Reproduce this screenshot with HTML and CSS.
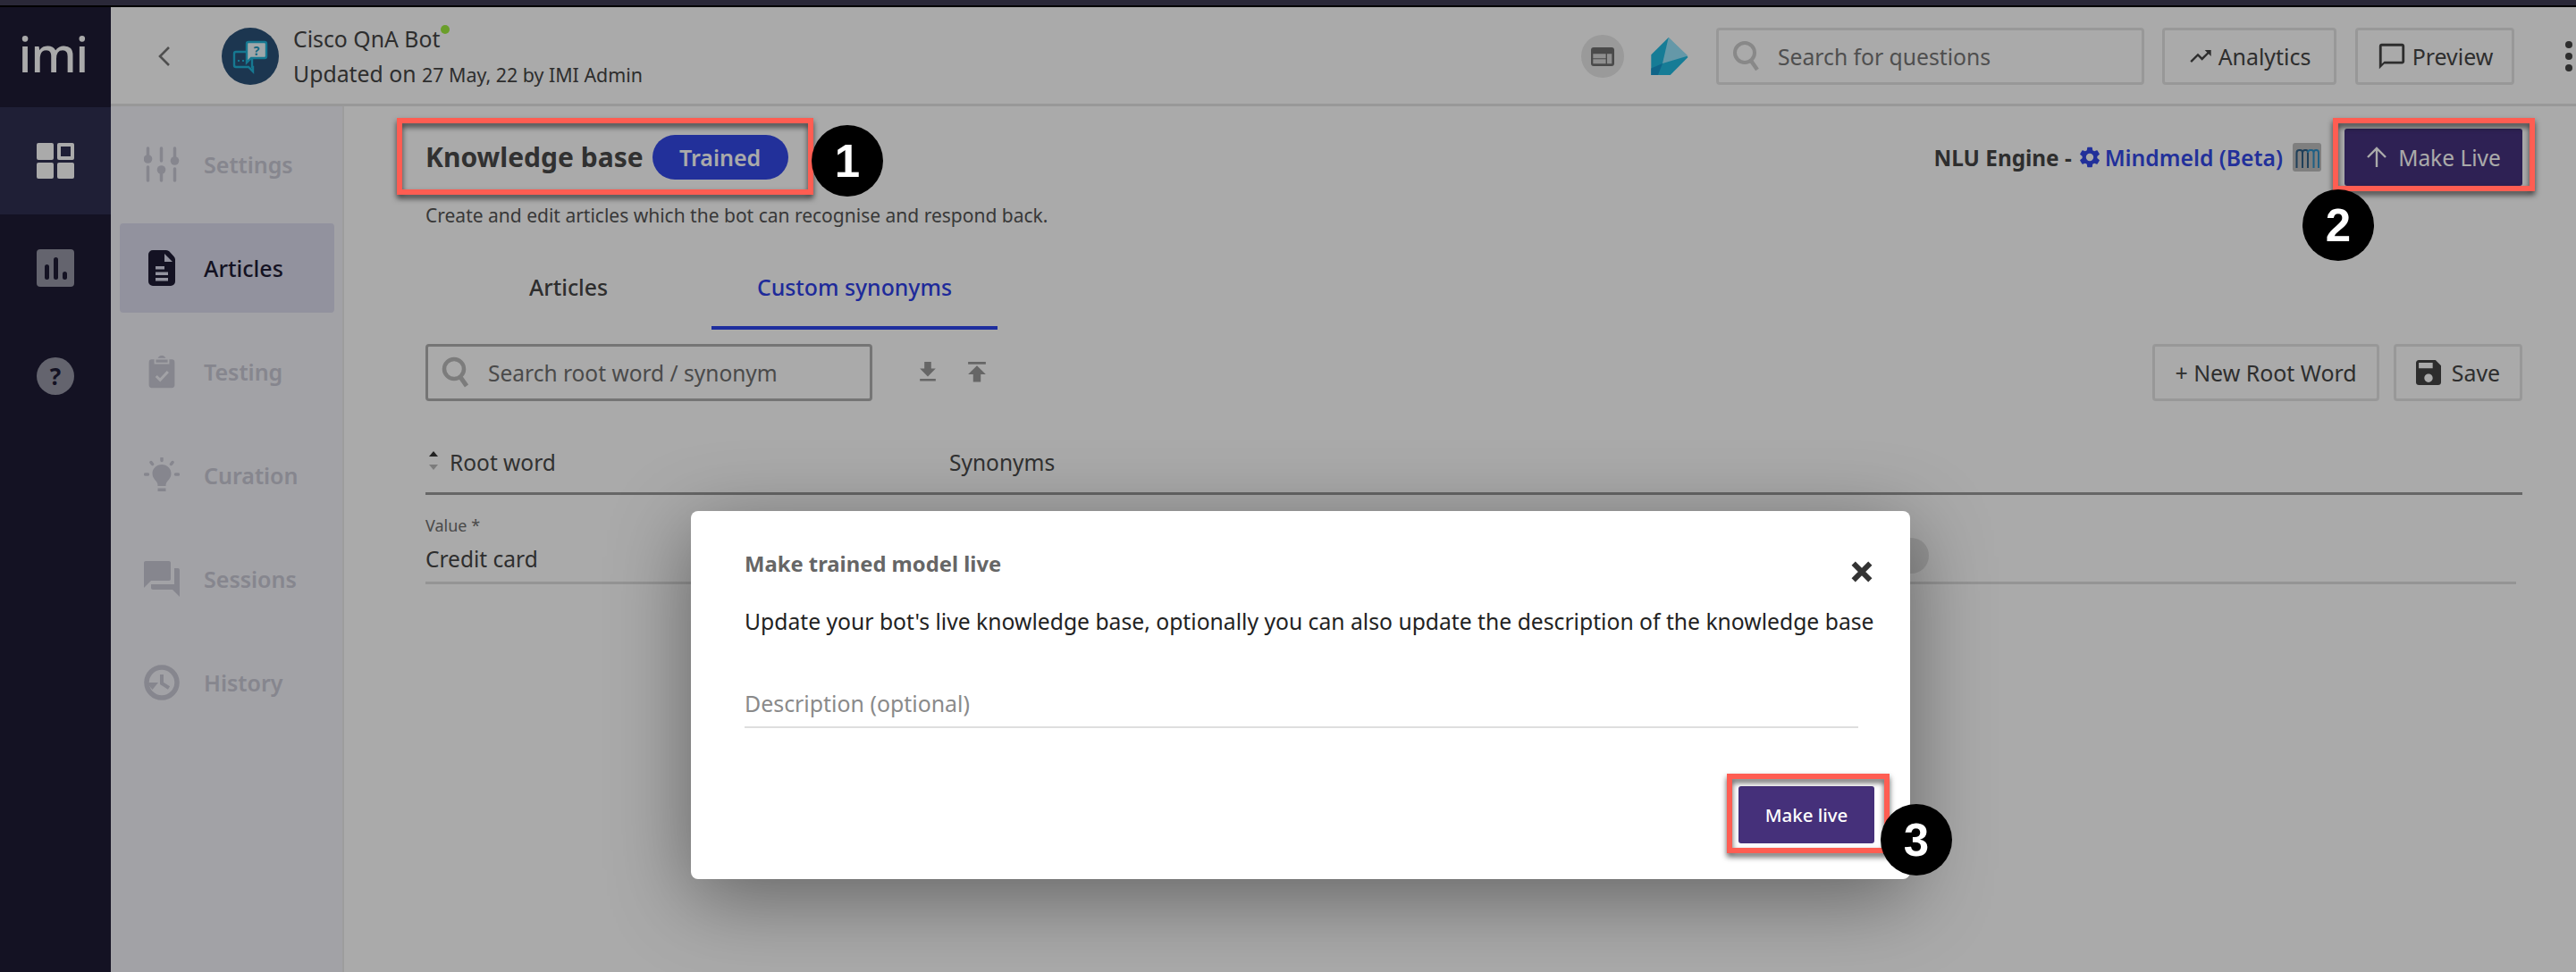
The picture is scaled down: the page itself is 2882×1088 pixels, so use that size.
FILE: index.html
```html
<!DOCTYPE html>
<html lang="en">
<head>
<meta charset="utf-8">
<title>Knowledge base</title>
<link rel="stylesheet" href="styles.css">
</head>
<body>
<div class="strip"></div>
<div class="app">
  <aside class="rail">
    <div class="logo">imi</div>
    <div class="rail-item active">
      <svg class="rail-icon" viewBox="0 0 42 40"><rect x="0" y="0" width="19" height="19" rx="2" fill="#fff"/><rect x="23" y="0" width="19" height="19" rx="2" fill="#fff"/><rect x="27" y="4" width="11" height="11" fill="#2f2f51"/><rect x="0" y="22" width="19" height="18" rx="2" fill="#fff"/><rect x="23" y="22" width="19" height="18" rx="2" fill="#fff"/></svg>
    </div>
    <div class="rail-item">
      <svg class="rail-icon" viewBox="0 0 42 42"><rect width="42" height="42" rx="4" fill="#9696a6"/><rect x="9" y="17" width="5" height="17" rx="2.5" fill="#1e1c35"/><rect x="19" y="9" width="5" height="25" rx="2.5" fill="#1e1c35"/><rect x="29" y="25" width="5" height="9" rx="2.5" fill="#1e1c35"/></svg>
    </div>
    <div class="rail-item short">
      <div class="help">?</div>
    </div>
  </aside>
  <div class="workspace">
    <header class="topbar">
      <svg class="back" viewBox="0 0 16 24"><path d="M13 2 3 12l10 10" fill="none" stroke="#777" stroke-width="2.6"/></svg>
      <div class="avatar">
        <svg viewBox="0 0 64 64"><path d="M16 27h18v17h1v5l-5-5H16a2 2 0 0 1-2-2V29a2 2 0 0 1 2-2z" fill="none" stroke="#22b5da" stroke-width="2.4"/><path d="M18 37h2M23 37h2" stroke="#22b5da" stroke-width="1.800"/><path d="M30 16h18a2 2 0 0 1 2 2v14a2 2 0 0 1-2 2H33l-5 5V18a2 2 0 0 1 2-2z" fill="#f0fbff" stroke="#22b5da" stroke-width="2.4"/><text x="39" y="31" class="avatar-q">?</text></svg>
      </div>
      <div class="bot">
        <div class="bot-name">Cisco QnA Bot<span class="online"></span></div>
        <div class="bot-meta">Updated on <span class="small">27 May, 22 by IMI Admin</span></div>
      </div>
      <div class="top-actions">
        <div class="round-icon"><svg viewBox="0 0 26 21"><rect width="26" height="21" rx="3" fill="#707070"/><path d="M2.300 7.300h14.300v5H2.300zM2.300 13.300h14.300v5H2.300zM18 7.300h5.300v11H18z" fill="#d5d5d5"/></svg></div>
        <svg class="kite" viewBox="0 0 42 42"><path d="M19.700 0 41.500 22 21.700 42H.3V19.300z" fill="#21bbe2"/><path d="M19.700 0 41.500 20.500 13 29z" fill="#98e5fd"/><path d="M.3 34.500 13 29 8 42H.3z" fill="#1796cd"/></svg>
        <div class="field top-search">
          <svg class="search-icon" viewBox="0 0 32 36"><circle cx="14" cy="14" r="11" fill="none" stroke="#ccc" stroke-width="4"/><path d="M21 23l7 10" stroke="#ccc" stroke-width="4.5"/></svg>
          <span>Search for questions</span>
        </div>
        <div class="btn analytics">
          <svg viewBox="0 0 24 24"><path d="M16 6l2.29 2.29-4.88 4.88-4-4L2 16.59 3.41 18l6-6 4 4 6.3-6.29L22 12V6z" fill="#444"/></svg>
          <span>Analytics</span>
        </div>
        <div class="btn preview">
          <svg viewBox="0 0 24 24"><path d="M20 2H4c-1.1 0-2 .9-2 2v18l4-4h14c1.1 0 2-.9 2-2V4c0-1.1-.9-2-2-2zm0 14H6l-2 2V4h16v12z" fill="#444"/></svg>
          <span>Preview</span>
        </div>
        <div class="dots"><i></i><i></i><i></i></div>
      </div>
    </header>
    <div class="body">
      <nav class="subnav">
        <div class="nav-item">
          <svg viewBox="0 0 40 40"><g stroke="#c9c9d5" stroke-width="3.500" fill="none" stroke-linecap="round"><path d="M4.500 2v11M4.500 23v15M19.500 2v14M19.500 25v13M34.500 2v13M34.500 25v13"/></g><g fill="#c9c9d5"><circle cx="4.500" cy="14" r="4.800"/><circle cx="19.500" cy="26" r="4.800"/><circle cx="34.500" cy="16" r="4.800"/></g></svg>
          <span>Settings</span>
        </div>
        <div class="nav-item current">
          <svg viewBox="0 0 30 40"><path fill-rule="evenodd" d="M5 0h15q2 0 3.500 1.500l5 5.500q1.500 1.500 1.500 3.500V35a5 5 0 0 1-5 5H5a5 5 0 0 1-5-5V5a5 5 0 0 1 5-5zM18 4v9h9zM8 18v3.500h10V18zM8 24.500V28h14v-3.500zM8 31v3.500h14V31z" fill="#1e1c35"/></svg>
          <span>Articles</span>
        </div>
        <div class="nav-item">
          <svg viewBox="-1 -1 26 32"><path d="M21 4h-5c-.4-1.900-2-3.500-4-3.500S8.400 2.100 8 4H3C1.500 4 .5 5 .5 6.500V27c0 1.500 1 2.500 2.500 2.500h18c1.500 0 2.500-1 2.500-2.500V6.500C23.500 5 22.500 4 21 4z" fill="#c9c9d5"/><path d="M7 19l3.500 3.500L17.500 15" stroke="#f3f3f9" stroke-width="2.4" fill="none"/><path d="M6 3.500h12v4H6z" fill="#c9c9d5" stroke="#f3f3f9" stroke-width="1.500"/></svg>
          <span>Testing</span>
        </div>
        <div class="nav-item">
          <svg viewBox="0 0 40 40"><path d="M20 8C14 8 9.500 12.500 9.500 18c0 4 2 6 4 8.500 1.500 2 2 3 2 5.500h9c0-2.500.5-3.500 2-5.500 2-2.500 4-4.500 4-8.500C30.500 12.500 26 8 20 8zM15.500 34.500h9V38h-9z" fill="#c9c9d5"/><path d="M20 1v2.500M8 5.500l1.500 2M32 5.500l-1.500 2M1.500 19h3M35.500 19h3" stroke="#c9c9d5" stroke-width="3.500" stroke-linecap="round"/></svg>
          <span>Curation</span>
        </div>
        <div class="nav-item">
          <svg viewBox="2 2 20 20"><path d="M21 6h-2v9H6v2c0 .55.45 1 1 1h11l4 4V7c0-.55-.45-1-1-1zm-4 6V3c0-.55-.45-1-1-1H3c-.55 0-1 .45-1 1v14l4-4h10c.55 0 1-.45 1-1z" fill="#c9c9d5"/></svg>
          <span>Sessions</span>
        </div>
        <div class="nav-item">
          <svg viewBox="0 0 40 40"><circle cx="20" cy="20" r="17" fill="none" stroke="#c9c9d5" stroke-width="5.500"/><path d="M20 11v10l8 5" fill="none" stroke="#c9c9d5" stroke-width="4"/><path d="M3 20h13l-6.500 8z" fill="#c9c9d5"/></svg>
          <span>History</span>
        </div>
      </nav>
      <main class="content">
        <div class="title-row">
          <h1>Knowledge base</h1>
          <span class="pill">Trained</span>
          <div class="engine">
            <span class="engine-label">NLU Engine -</span>
            <svg class="gear" viewBox="0 0 24 24"><path fill-rule="evenodd" d="M19.140 12.940c.04-.3.06-.61.06-.94 0-.32-.02-.64-.07-.94l2.030-1.580a.49.49 0 0 0 .12-.61l-1.920-3.320a.49.49 0 0 0-.59-.22l-2.390.96c-.5-.38-1.030-.7-1.620-.94l-.36-2.540a.48.48 0 0 0-.48-.41h-3.840c-.24 0-.43.17-.47.41l-.36 2.540c-.59.24-1.130.57-1.620.94l-2.390-.96c-.22-.08-.47 0-.59.22L2.740 8.870c-.12.21-.08.47.12.61l2.030 1.580c-.05.3-.09.63-.09.94s.02.64.07.94l-2.030 1.580a.49.49 0 0 0-.12.61l1.920 3.320c.12.22.37.29.59.22l2.390-.96c.5.38 1.030.7 1.620.94l.36 2.540c.05.24.24.41.48.41h3.840c.24 0 .44-.17.47-.41l.36-2.540c.59-.24 1.130-.56 1.620-.94l2.390.96c.22.08.47 0 .59-.22l1.920-3.320c.12-.22.07-.47-.12-.61zM12 15.600A3.600 3.600 0 1 1 12 8.400a3.600 3.600 0 0 1 0 7.200z" fill="#3349e8"/></svg>
            <span class="engine-name">Mindmeld (Beta)</span>
            <div class="mm"><svg viewBox="0 0 32 32"><path d="M4.500 28V11q0-3 3-3h1q2.500 0 2.500 3v17M11 11q0-3 3-3h1q2 0 2 3v17" fill="none" stroke="#2f5f86" stroke-width="2"/><path d="M17 11q0-3 3-3h1q2.500 0 2.500 3v17M23.500 11q0-3 2.500-3h.5q2.500 0 2.500 3v17" fill="none" stroke="#2f8fc6" stroke-width="2"/></svg></div>
            <div class="make-live">
              <svg viewBox="0 0 24 24"><path d="M12 23V2M2 12 12 2l10 10" fill="none" stroke="#fff" stroke-width="2.4"/></svg>
              <span>Make Live</span>
            </div>
          </div>
        </div>
        <p class="subtitle">Create and edit articles which the bot can recognise and respond back.</p>
        <div class="tabs">
          <div class="tab">Articles</div>
          <div class="tab selected">Custom synonyms</div>
        </div>
        <div class="toolbar">
          <div class="field root-search">
            <svg class="search-icon" viewBox="0 0 32 36"><circle cx="14" cy="14" r="11" fill="none" stroke="#bbb" stroke-width="4.5"/><path d="M21 23l7 10" stroke="#bbb" stroke-width="5"/></svg>
            <span>Search root word / synonym</span>
          </div>
          <svg class="tool-icon" viewBox="5 3 14 19"><path d="M19 9h-4V3H9v6H5l7 7 7-7zM5 18v2h14v-2H5z" fill="#999"/></svg>
          <svg class="tool-icon second" viewBox="5 4 14 17"><path d="M5 4v2h14V4H5zm0 10h4v6h6v-6h4l-7-7-7 7z" fill="#999"/></svg>
          <div class="btn new-root">+ New Root Word</div>
          <div class="btn save">
            <svg viewBox="3 3 18 18"><path d="M17 3H5c-1.110 0-2 .9-2 2v14c0 1.100.89 2 2 2h14c1.100 0 2-.9 2-2V7l-4-4zm-5 16c-1.660 0-3-1.340-3-3s1.340-3 3-3 3 1.340 3 3-1.340 3-3 3zm3-10H5V5h10v4z" fill="#444"/></svg>
            <span>Save</span>
          </div>
        </div>
        <div class="table-head">
          <span class="sort"><i class="up"></i><i class="down"></i></span>
          <span class="col-root">Root word</span>
          <span class="col-syn">Synonyms</span>
        </div>
        <div class="table-row">
          <div class="row-label">Value *</div>
          <div class="row-value">Credit card</div>
          <span class="row-chip"></span>
        </div>
      </main>
    </div>
  </div>
</div>

<div class="overlay"></div>

<section class="modal">
  <h2>Make trained model live</h2>
  <svg class="close" viewBox="3 3 18 18"><path d="M5 5l14 14M19 5 5 19" stroke="#333" stroke-width="4.500"/></svg>
  <p>Update your bot's live knowledge base, optionally you can also update the description of the knowledge base</p>
  <div class="desc">Description (optional)</div>
  <div class="modal-foot"><div class="modal-btn">Make live</div></div>
</section>

<div class="mark mark-1"></div>
<div class="mark mark-2"></div>
<div class="mark mark-3"></div>
<div class="num num-1">1</div>
<div class="num num-2">2</div>
<div class="num num-3">3</div>
</body>
</html>
```
FILE: styles.css
```css
* { box-sizing: border-box; }
html, body { margin: 0; height: 100%; }
body {
  width: 2882px;
  height: 1088px;
  overflow: hidden;
  position: relative;
  background: #fff;
  font-family: "Noto Sans", "Roboto", sans-serif;
  color: #454545;
  display: flex;
  flex-direction: column;
}
.strip { height: 8px; flex: none; background: #3f3c54; border-bottom: 2px solid #000; }
.app { flex: 1; display: flex; min-height: 0; }

.rail { width: 124px; flex: none; background: #1e1c35; }
.logo { height: 112px; display: flex; align-items: center; justify-content: center; padding: 0 5px 8px 0; color: #fff; font-size: 54px; font-weight: 500; letter-spacing: -1px; }
.rail-item { height: 120px; display: flex; align-items: center; justify-content: center; }
.rail-item.active { background: #2f2f51; }
.rail-item.short { height: 122px; }
.rail-icon { width: 42px; height: 42px; display: block; }
.help { width: 42px; height: 42px; border-radius: 50%; background: #9696a6; color: #1e1c35; font-weight: 700; font-size: 26px; display: flex; align-items: center; justify-content: center; }

.workspace { flex: 1; min-width: 0; display: flex; flex-direction: column; }
.topbar { height: 111px; flex: none; display: flex; align-items: center; border-bottom: 3px solid #e5e5e5; padding-left: 52px; padding-top: 2px; }
.back { width: 16px; height: 24px; flex: none; }
.avatar { width: 64px; height: 64px; margin-left: 56px; border-radius: 50%; background: #2a5178; flex: none; }
.avatar svg { width: 64px; height: 64px; display: block; }
.avatar-q { font-size: 14px; font-weight: 700; fill: #1f9cc0; text-anchor: middle; }
.bot { margin-left: 16px; }
.bot-name { font-size: 24.800px; line-height: 30px; position: relative; display: inline-block; }
.online { position: absolute; top: 0; right: -11px; width: 10px; height: 10px; border-radius: 50%; background: #a0ee40; }
.bot-meta { font-size: 24.800px; line-height: 30px; margin-top: 9px; }
.small { font-size: 21.400px; }
.top-actions { margin-left: auto; display: flex; align-items: center; }
.round-icon { width: 48px; height: 48px; border-radius: 50%; background: #e7e7e7; display: flex; align-items: center; justify-content: center; }
.round-icon svg { width: 26px; height: 21px; }
.kite { width: 42px; height: 42px; margin-left: 30px; }
.field { display: flex; align-items: center; border: 3px solid #e5e5e5; border-radius: 4px; height: 64px; font-size: 24.700px; color: #777; }
.search-icon { width: 32px; height: 36px; flex: none; }
.top-search { width: 479px; margin-left: 31px; padding-left: 15px; gap: 19px; }
.btn { display: flex; align-items: center; justify-content: center; height: 64px; border: 3px solid #e5e5e5; border-radius: 4px; font-size: 24.900px; color: #454545; }
.btn svg { width: 28px; height: 28px; flex: none; }
.analytics { width: 195px; margin-left: 20px; gap: 6px; }
.preview { width: 178px; margin-left: 21px; gap: 6px; }
.preview svg { width: 34px; height: 34px; }
.dots { margin-left: 57px; margin-right: 4px; width: 8px; display: flex; flex-direction: column; gap: 5px; flex: none; }
.dots i { width: 8px; height: 8px; border-radius: 50%; background: #454545; display: block; }

.body { flex: 1; display: flex; min-height: 0; }
.subnav { width: 261px; flex: none; background: #f3f3f9; border-right: 2px solid #ececec; padding: 15px 10px 0 10px; display: flex; flex-direction: column; gap: 16px; }
.nav-item { height: 100px; width: 240px; display: flex; align-items: center; border-radius: 4px; color: #c9c9d5; font-size: 25px; font-weight: 600; padding-left: 27px; gap: 27px; }
.nav-item svg { width: 40px; height: 40px; flex: none; }
.nav-item.current { background: #dbdbee; color: #1e1c35; font-weight: 500; }
.content { flex: 1; min-width: 0; padding: 25px 60px 0 91px; position: relative; }

.title-row { display: flex; align-items: center; height: 64px; }
h1 { margin: 0; font-size: 30px; font-weight: 700; color: #4a4a4a; line-height: 40px; }
.pill { margin-left: 10px; width: 152px; height: 50px; border-radius: 25px; background: #3349e8; color: #fff; font-size: 25px; font-weight: 600; display: flex; align-items: center; justify-content: center; }
.engine { margin-left: auto; display: flex; align-items: center; }
.engine-label { font-size: 24.300px; font-weight: 700; color: #454545; }
.gear { width: 28px; height: 28px; margin-left: 6px; }
.engine-name { margin-left: 3px; font-size: 24.700px; font-weight: 600; color: #3349e8; }
.mm { width: 32px; height: 32px; margin-left: 11px; background: #bfbfbf; border-radius: 3px; }
.mm svg { width: 32px; height: 32px; display: block; }
.make-live { width: 199px; height: 64px; margin-left: 26px; background: #45327e; border-radius: 3px; color: #fff; font-size: 24.500px; display: flex; align-items: center; justify-content: center; gap: 12px; }
.make-live svg { width: 24px; height: 24px; }
.subtitle { margin: 18px 0 0; font-size: 21px; line-height: 30px; color: #555; }

.tabs { display: flex; margin-top: 45px; height: 68px; }
.tab { width: 320px; display: flex; align-items: center; justify-content: center; padding-bottom: 24px; font-size: 24.800px; font-weight: 500; color: #454545; border-bottom: 4px solid transparent; }
.tab.selected { color: #2f3fe8; border-bottom-color: #2e46ed; }

.toolbar { display: flex; align-items: center; margin-top: 16px; }
.root-search { width: 500px; border-color: #b0b0b0; padding-left: 15px; gap: 20px; color: #707070; font-size: 24.500px; }
.tool-icon { width: 20px; height: 24px; margin-left: 52px; }
.tool-icon.second { margin-left: 35px; }
.new-root { width: 254px; margin-left: auto; }
.save { width: 144px; margin-left: 16px; gap: 12px; }
.table-head { position: relative; display: flex; align-items: center; height: 105px; padding-top: 34px; border-bottom: 3px solid #999; font-size: 24.500px; color: #4a4a4a; }
.sort { width: 27px; flex: none; display: flex; flex-direction: column; gap: 9px; margin-left: 4px; margin-top: -4px; }
.sort i { display: block; width: 0; height: 0; border-left: 5px solid transparent; border-right: 5px solid transparent; }
.sort .up { border-bottom: 6px solid #333; }
.sort .down { border-top: 6px solid #bbb; }
.col-root { width: 559px; margin-left: -4px; }
.table-row { position: relative; height: 100px; width: 2339px; border-bottom: 3px solid #dedede; padding-top: 22px; }
.row-label { font-size: 18px; line-height: 24px; color: #6f6f6f; }
.row-value { font-size: 24.500px; line-height: 32px; margin-top: 10px; color: #454545; }
.row-chip { position: absolute; left: 1642px; top: 48px; width: 40px; height: 40px; border-radius: 50%; background: #e3e3e3; }

.overlay { position: absolute; inset: 0; background: rgba(0, 0, 0, .335); }

.modal { position: absolute; left: 773px; top: 572px; width: 1364px; height: 412px; padding: 40px 40px 0 60px; background: #fff; border-radius: 8px; box-shadow: 0 20px 90px rgba(0, 0, 0, .42); color: #333; }
.modal h2 { margin: 0; font-size: 23.800px; line-height: 38px; font-weight: 700; color: #666; }
.close { position: absolute; left: 1298px; top: 56px; width: 24px; height: 24px; }
.modal p { margin: 28px 0 0; font-size: 24.700px; line-height: 36px; white-space: nowrap; color: #222; }
.desc { margin-top: 49px; width: 1246px; height: 52px; padding-top: 7px; font-size: 24.900px; line-height: 34px; color: #8a8a8a; border-bottom: 2px solid #dedede; }
.modal-foot { display: flex; justify-content: flex-end; margin-top: 65px; }
.modal-btn { width: 152px; height: 64px; background: #45307a; border-radius: 3px; color: #fff; font-size: 20.500px; font-weight: 500; display: flex; align-items: center; justify-content: center; }

.mark { position: absolute; border: 6px solid #ff5d52; filter: drop-shadow(0 4px 3px rgba(0, 0, 0, .65)); }
.mark-1 { left: 444px; top: 132px; width: 466px; height: 86px; }
.mark-2 { left: 2610px; top: 132px; width: 226px; height: 82px; }
.mark-3 { left: 1932px; top: 866px; width: 182px; height: 89px; }
.num { position: absolute; width: 80px; height: 80px; border-radius: 50%; background: #000; color: #fff; font-family: "Liberation Sans", sans-serif; font-size: 51px; font-weight: 700; display: flex; align-items: center; justify-content: center; }
.num-1 { left: 908px; top: 140px; }
.num-2 { left: 2576px; top: 212px; }
.num-3 { left: 2104px; top: 900px; }
```
